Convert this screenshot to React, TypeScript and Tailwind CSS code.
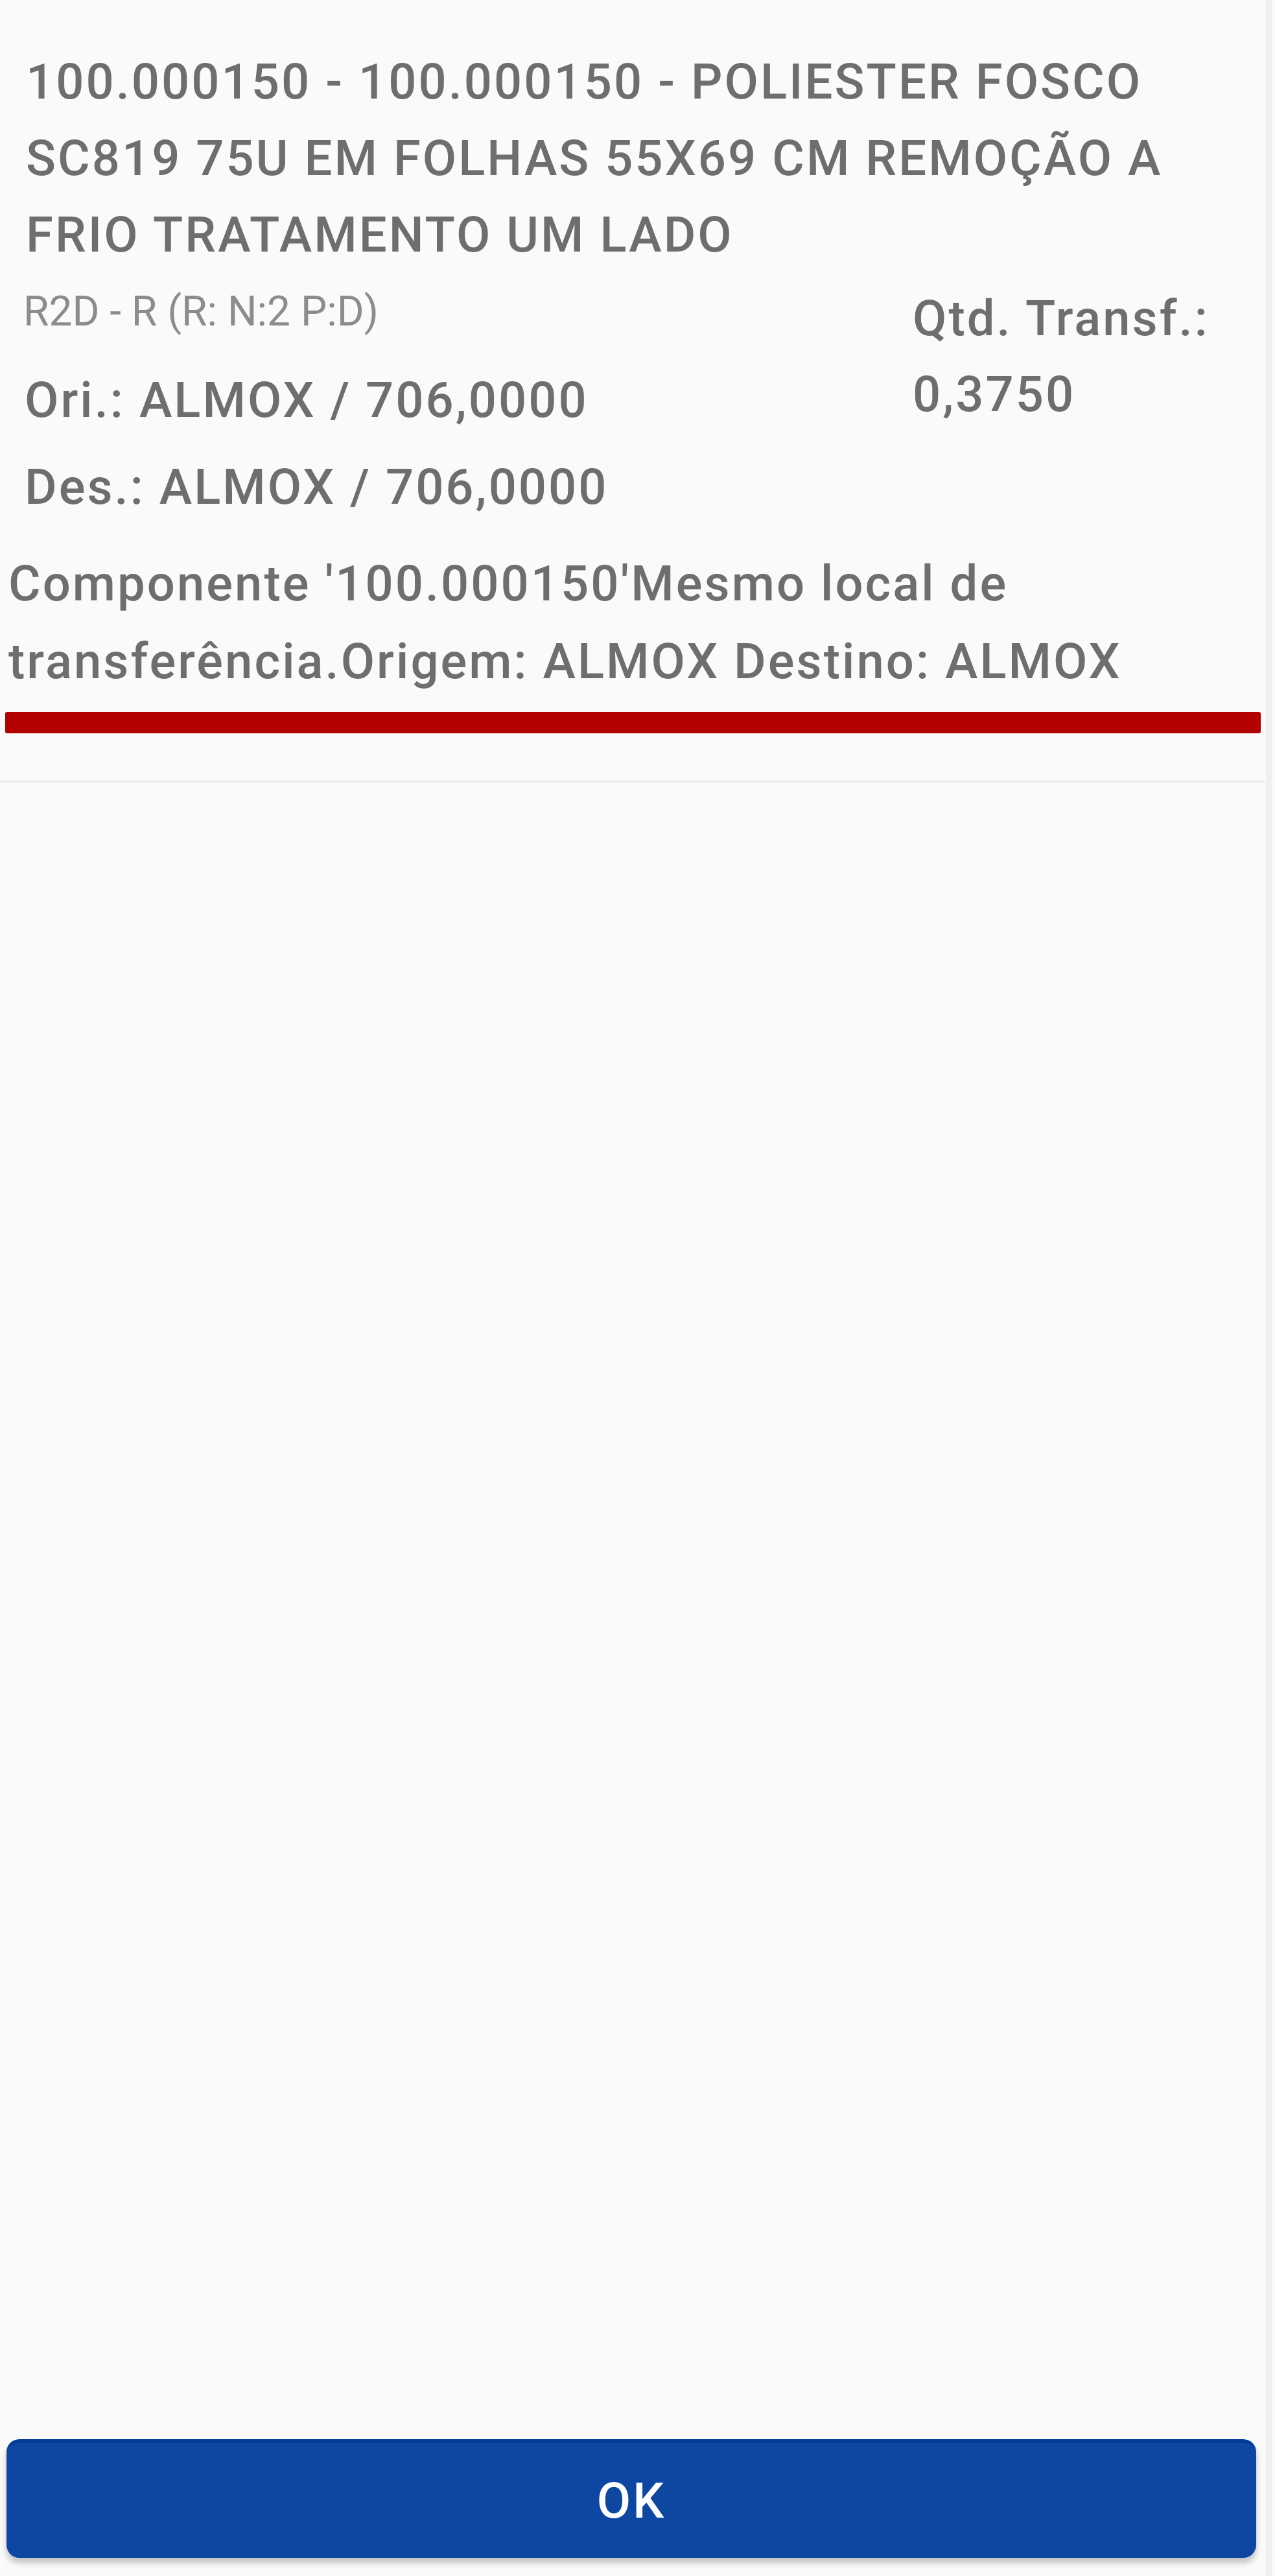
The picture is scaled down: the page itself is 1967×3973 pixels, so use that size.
import React from 'react';

const TextLine: React.FC<{ className?: string; children: React.ReactNode }> = ({ className, children }) => (
  <div className={`font-[Roboto,sans-serif] ${className ?? ''}`}>{children}</div>
);

export default function App() {
  return (
    <div className="flex h-[3973px] w-full bg-[#fafafa] font-[Roboto,sans-serif]">
      <main className="flex w-[1953px] flex-col">
        {/* item header */}
        <section className="pt-[67px]">
          <div className="w-[1860px] pl-[40px] text-[76px] font-medium leading-[118px] tracking-[0.04em] text-[#6e6e6e]">
            100.000150 - 100.000150 - POLIESTER FOSCO SC819 75U EM FOLHAS 55X69 CM REMOÇÃO A FRIO TRATAMENTO UM LADO
          </div>

          <div className="mt-[12px] flex">
            <div className="flex w-[1408px] flex-col">
              <TextLine className="pl-[36px] text-[64px] leading-[96px] text-[#8c8c8c]">R2D - R (R: N:2 P:D)</TextLine>
              <TextLine className="mt-[30px] pl-[38px] text-[76px] font-medium leading-[117px] tracking-[0.04em] text-[#6e6e6e]">
                Ori.: ALMOX / 706,0000
              </TextLine>
              <TextLine className="mt-[17px] pl-[38px] text-[76px] font-medium leading-[117px] tracking-[0.04em] text-[#6e6e6e]">
                Des.: ALMOX / 706,0000
              </TextLine>
            </div>
            <div className="flex flex-col text-[76px] font-medium leading-[117px] tracking-[0.04em] text-[#6e6e6e]">
              <span>Qtd. Transf.:</span>
              <span>0,3750</span>
            </div>
          </div>

          <div className="mt-[30px] w-[1900px] pl-[13px] text-[76px] font-medium leading-[120px] tracking-[0.04em] text-[#6e6e6e]">
            Componente '100.000150'Mesmo local de transferência.Origem: ALMOX Destino: ALMOX
          </div>

          <div className="mx-[8px] mt-[18px] h-[33px] rounded-[3px] bg-[#b30000] shadow-[0_0_4px_rgba(255,255,255,0.9)]" />
        </section>

        <div className="mt-[73px] h-[3px] bg-[#ececec]" />

        <div className="flex-1" />

        <div className="px-[10px] pb-[28px]">
          <button className="flex h-[183px] w-[1928px] items-center justify-center rounded-[20px] border-t-[6px] border-[#033b96] bg-[#0d47a1] text-[76px] font-medium tracking-[0.04em] text-white shadow-[0_8px_10px_rgba(0,0,0,0.22)]">
            OK
          </button>
        </div>
      </main>
      <div className="w-[9px] bg-[#efefef]" />
      <div className="flex-1" />
    </div>
  );
}
